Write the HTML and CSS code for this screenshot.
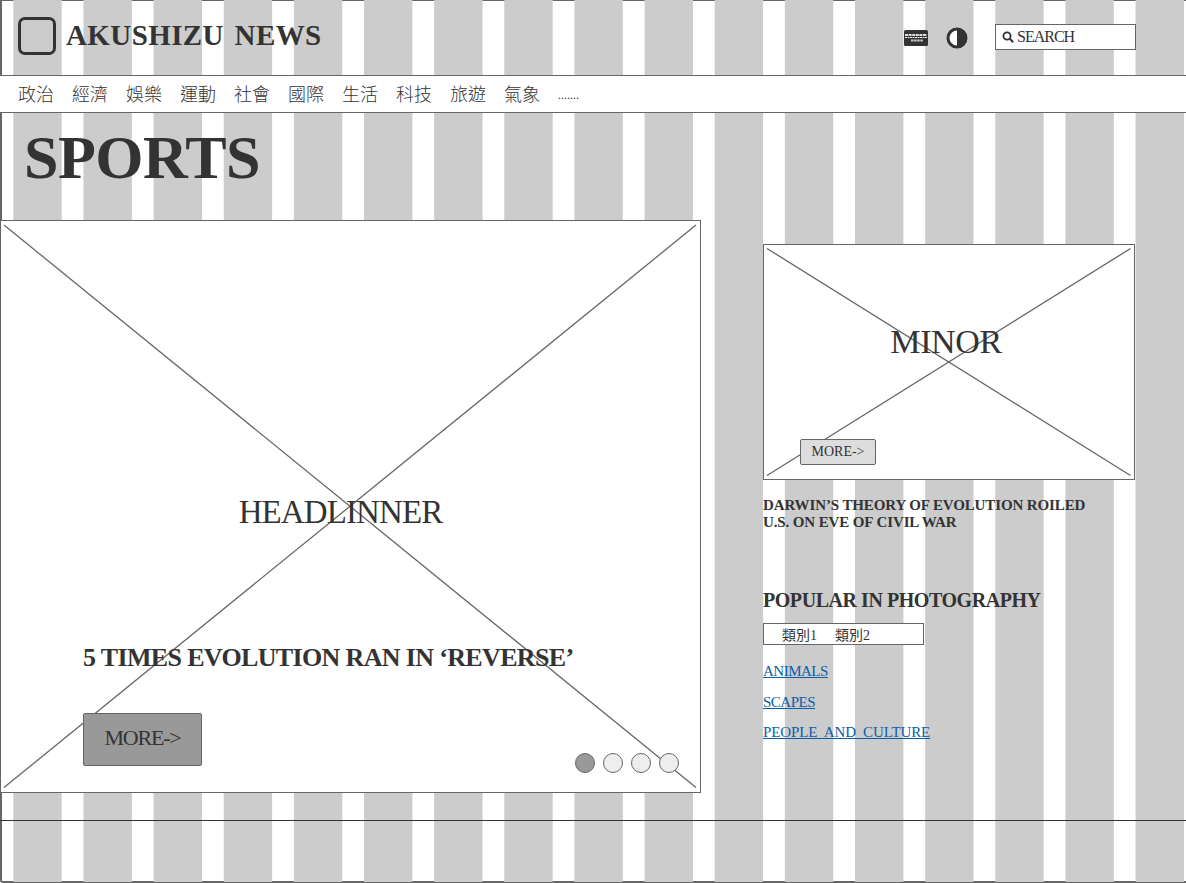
FILE: index.html
```html
<!DOCTYPE html>
<html lang="zh-Hant">
<head>
<meta charset="utf-8">
<title>Akushizu News</title>
<link rel="stylesheet" href="styles.css">
</head>
<body>
<div class="page">
  <header class="topbar">
    <div class="brand">
      <span class="logo"></span>
      <span class="brand-name">AKUSHIZU NEWS</span>
    </div>
    <div class="tools">
      <svg class="card-icon" width="24" height="16" viewBox="0 0 24 16" aria-hidden="true">
        <rect x="0" y="0" width="24" height="16" rx="1.5" fill="#333"/>
        <path d="M1 5h22" stroke="#ddd" stroke-width="2" stroke-dasharray="3 .6"/>
        <path d="M1 7.5h22" stroke="#eee" stroke-width="1" stroke-dasharray="2 .5"/>
        <path d="M7 10.5h12" stroke="#ccc" stroke-width="2" stroke-dasharray="2.5 .6"/>
      </svg>
      <svg class="contrast-icon" width="22" height="22" viewBox="0 0 22 22" aria-hidden="true">
        <circle cx="11" cy="11" r="9" fill="#fff" stroke="#333" stroke-width="3"/>
        <path d="M11 2a9 9 0 0 1 0 18z" fill="#333"/>
      </svg>
      <div class="search">
        <svg width="12" height="12" viewBox="0 0 12 12" aria-hidden="true">
          <circle cx="5" cy="5" r="3.6" fill="none" stroke="#333" stroke-width="1.8"/>
          <path d="M7.8 7.8l3.4 3.4" stroke="#333" stroke-width="2"/>
        </svg>
        <span>SEARCH</span>
      </div>
    </div>
  </header>
  <nav class="nav">
    <a>政治</a><a>經濟</a><a>娛樂</a><a>運動</a><a>社會</a><a>國際</a><a>生活</a><a>科技</a><a>旅遊</a><a>氣象</a><a class="dots">.......</a>
  </nav>
  <h1 class="section-title">SPORTS</h1>
  <main class="content">
    <section class="headliner">
      <svg class="cross" viewBox="0 0 699 571" preserveAspectRatio="none" aria-hidden="true">
        <line x1="3" y1="4" x2="695" y2="566.5"/>
        <line x1="695" y1="4" x2="3" y2="566.5"/>
      </svg>
      <div class="headliner-label">HEADLINNER</div>
      <h2 class="headliner-title">5 TIMES EVOLUTION RAN IN ‘REVERSE’</h2>
      <a class="btn-large">MORE-&gt;</a>
      <div class="dots-row">
        <span class="dot active"></span><span class="dot"></span><span class="dot"></span><span class="dot"></span>
      </div>
    </section>
    <aside class="side">
      <section class="minor">
        <svg class="cross" viewBox="0 0 370 234" preserveAspectRatio="none" aria-hidden="true">
          <line x1="3" y1="3.5" x2="366.5" y2="230.5"/>
          <line x1="366.5" y1="3.5" x2="3" y2="230.5"/>
        </svg>
        <div class="minor-label">MINOR</div>
        <a class="btn-small">MORE-&gt;</a>
      </section>
      <h3 class="minor-title">DARWIN’S THEORY OF EVOLUTION ROILED U.S. ON EVE OF CIVIL WAR</h3>
      <h3 class="popular">POPULAR IN PHOTOGRAPHY</h3>
      <div class="tabs"><span>類別1</span><span>類別2</span></div>
      <ul class="links">
        <li><a href="#">ANIMALS</a></li>
        <li><a href="#">SCAPES</a></li>
        <li class="wide"><a href="#">PEOPLE AND CULTURE</a></li>
      </ul>
    </aside>
  </main>
  <footer class="footer"></footer>
</div>
</body>
</html>
```
FILE: styles.css
```css
* { box-sizing: border-box; }
html, body { margin: 0; padding: 0; height: 100%; }
body {
  width: 1186px;
  height: 883px;
  overflow: hidden;
  background: #fff;
  color: #333;
  font-family: "Liberation Serif", "Noto Sans CJK TC", serif;
}
.page {
  height: 883px;
  padding-top: 1px;
  border-left: 2px solid #666;
  border-bottom-left-radius: 3px;
  background-color: #fff;
  background-image:
    repeating-linear-gradient(90deg, #ccc 0, #ccc 48px, transparent 48px, transparent 70.15px),
    linear-gradient(#666, #666),
    linear-gradient(#666, #666);
  background-position: 11.3px 0, 0 0, 0 100%;
  background-size: 70.15px 882px, 100% 1px, 100% 2px;
  background-repeat: repeat-x, no-repeat, no-repeat;
}
.topbar {
  height: 74px;
  display: flex;
  justify-content: space-between;
  align-items: center;
  padding: 0 50px 4px 16px;
}
.brand { display: flex; align-items: center; gap: 10px; }
.logo {
  width: 38px;
  height: 38px;
  border: 3px solid #333;
  border-radius: 7px;
}
.brand-name {
  font-size: 29px;
  font-weight: 700;
  letter-spacing: 0.4px;
  word-spacing: 3px;
  line-height: 34px;
  padding-bottom: 2px;
}
.tools { display: flex; align-items: center; margin-top: 2px; margin-right: 0; }
.card-icon { margin-right: 18px; margin-left: 2px; margin-top: 2px; }
.contrast-icon { margin-right: 27px; margin-top: 2px; }
.search {
  width: 141px;
  height: 26px;
  border: 1px solid #666;
  background: #fff;
  display: flex;
  align-items: center;
  gap: 3px;
  padding-left: 6px;
  font-size: 16px;
  letter-spacing: -1px;
}
.nav {
  height: 38px;
  border-top: 1px solid #666;
  border-bottom: 1px solid #666;
  margin-left: -2px;
  background: #fff;
  display: flex;
  align-items: center;
  gap: 18px;
  padding: 0 0 2px 18px;
  font-size: 18px;
  font-family: "Noto Sans CJK TC", sans-serif;
  font-weight: 300;
}
.nav a { display: block; }
.nav .dots { font-size: 12px; font-family: "Liberation Serif", serif; padding-top: 4px; }
.section-title {
  margin: 0;
  height: 107px;
  padding: 8px 0 0 22px;
  font-size: 62px;
  line-height: 72px;
  font-weight: 700;
  letter-spacing: -0.5px;
}
.content { display: flex; align-items: flex-start; margin-left: -2px; }
.headliner {
  position: relative;
  width: 701px;
  height: 573px;
  border: 1px solid #666;
  background: #fff;
  flex: none;
}
.cross { position: absolute; inset: 0; width: 100%; height: 100%; }
.cross line { stroke: #666; stroke-width: 1.3; vector-effect: non-scaling-stroke; }
.headliner-label {
  position: absolute;
  left: 0;
  width: 679px;
  top: 271px;
  text-align: center;
  font-size: 33px;
  line-height: 40px;
  letter-spacing: -0.9px;
}
.headliner-title {
  position: absolute;
  left: 82px;
  top: 420px;
  margin: 0;
  font-size: 26px;
  line-height: 34px;
  font-weight: 700;
  letter-spacing: -0.65px;
  white-space: nowrap;
}
.btn-large {
  position: absolute;
  left: 82px;
  top: 492px;
  width: 119px;
  height: 53px;
  padding-bottom: 4px;
  border: 1px solid #666;
  border-radius: 2px;
  background: #999;
  font-size: 22px;
  letter-spacing: -1.2px;
  display: flex;
  align-items: center;
  justify-content: center;
}
.dots-row {
  position: absolute;
  left: 574px;
  top: 532px;
  display: flex;
  gap: 8px;
}
.dot {
  width: 20px;
  height: 20px;
  border: 1px solid #666;
  border-radius: 50%;
  background: #eee;
}
.dot.active { background: #999; }
.side { margin: 24px 0 0 62px; width: 372px; flex: none; }
.minor {
  position: relative;
  height: 236px;
  border: 1px solid #666;
  background: #fff;
}
.minor-label {
  position: absolute;
  left: 0;
  width: 364px;
  top: 75px;
  text-align: center;
  font-size: 34px;
  line-height: 44px;
  letter-spacing: -0.4px;
}
.btn-small {
  position: absolute;
  left: 36px;
  top: 194px;
  width: 76px;
  height: 26px;
  border: 1px solid #666;
  border-radius: 2px;
  background: #ddd;
  font-size: 14px;
  display: flex;
  align-items: center;
  justify-content: center;
}
.minor-title {
  margin: 17px 0 0;
  width: 330px;
  font-size: 15px;
  line-height: 17px;
  font-weight: 700;
  letter-spacing: -0.12px;
}
.popular {
  margin: 57px 0 0;
  font-size: 20px;
  line-height: 24px;
  font-weight: 700;
  letter-spacing: -0.45px;
}
.tabs {
  width: 161px;
  height: 22px;
  margin-top: 11px;
  border: 1px solid #666;
  background: #fff;
  display: flex;
  align-items: center;
  gap: 18px;
  padding-left: 18px;
  font-size: 14px;
}
.links { list-style: none; margin: 16px 0 0; padding: 0; }
.links li { height: 30.5px; font-size: 15px; line-height: 20px; letter-spacing: -0.5px; }
.links li.wide { letter-spacing: -0.1px; word-spacing: 3.5px; }
.links a { color: #0b5ea8; }
.footer {
  margin-top: 27px;
  margin-left: -2px;
  border-top: 1px solid #333;
}
```
